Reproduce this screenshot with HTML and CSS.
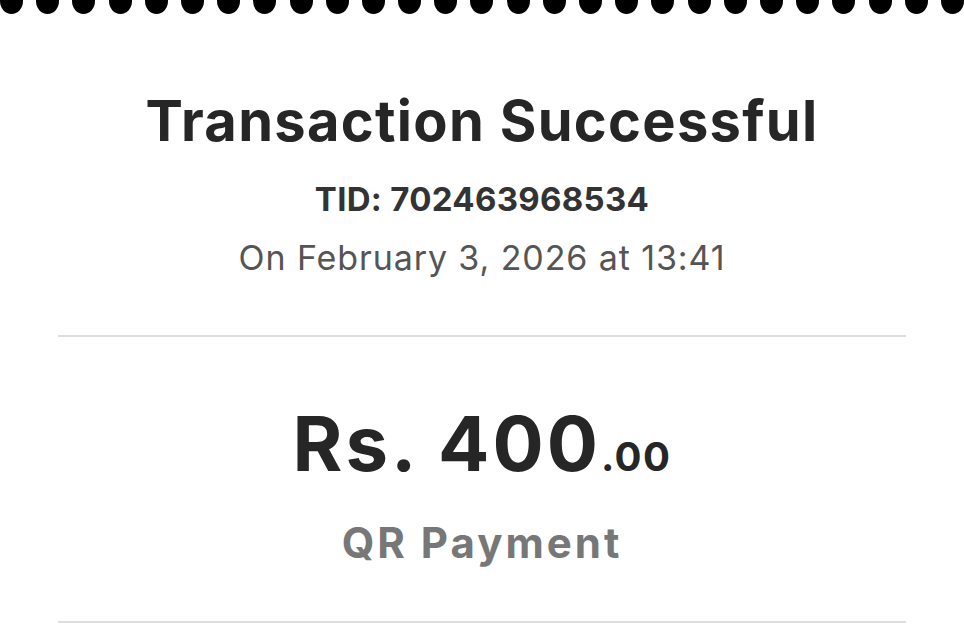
FILE: index.html
```html
<!DOCTYPE html>
<html lang="en">
<head>
<meta charset="utf-8">
<title>Transaction Successful</title>
<link rel="stylesheet" href="styles.css">
</head>
<body>
<div class="perf">
  <span class="dot"></span><span class="dot"></span><span class="dot"></span><span class="dot"></span><span class="dot"></span><span class="dot"></span><span class="dot"></span><span class="dot"></span><span class="dot"></span>
  <span class="dot"></span><span class="dot"></span><span class="dot"></span><span class="dot"></span><span class="dot"></span><span class="dot"></span><span class="dot"></span><span class="dot"></span><span class="dot"></span>
  <span class="dot"></span><span class="dot"></span><span class="dot"></span><span class="dot"></span><span class="dot"></span><span class="dot"></span><span class="dot"></span><span class="dot"></span><span class="dot"></span>
</div>
<main class="receipt">
  <section class="head">
    <h1 class="title">Transaction Successful</h1>
    <p class="tid">TID: 702463968534</p>
    <p class="date">On February 3, 2026 at 13:41</p>
  </section>
  <section class="amount-block">
    <p class="amount">Rs. 400<span class="cents">.00</span></p>
    <p class="method">QR Payment</p>
  </section>
</main>
</body>
</html>
```
FILE: styles.css
```css
* { box-sizing: border-box; }
html, body { margin: 0; padding: 0; background: #fff; }
body {
  font-family: Inter, "Open Sans", "Liberation Sans", sans-serif;
  color: #262626;
  width: 964px;
  height: 643px;
  overflow: hidden;
}
.perf {
  display: flex;
  justify-content: space-between;
  height: 14px;
  overflow: hidden;
}
.dot {
  flex: 0 0 23px;
  width: 23px;
  height: 26px;
  margin-top: -12px;
  border-radius: 50%;
  background: #000;
}
.receipt {
  padding: 0 58px;
}
.head {
  text-align: center;
  padding-top: 75px;
  padding-bottom: 57px;
  border-bottom: 2px solid #dedede;
}
.title {
  margin: 0;
  font-size: 56px;
  line-height: 64px;
  font-weight: 700;
  letter-spacing: 1.3px;
  color: #262626;
}
.tid {
  margin: 26px 0 0;
  font-size: 33px;
  line-height: 40px;
  font-weight: 700;
  letter-spacing: 0.3px;
  color: #333;
}
.date {
  margin: 19px 0 0;
  font-size: 34px;
  line-height: 40px;
  font-weight: 400;
  letter-spacing: 0.9px;
  color: #555;
}
.amount-block {
  text-align: center;
  padding-top: 61px;
  padding-bottom: 53px;
  border-bottom: 2px solid #dedede;
}
.amount {
  margin: 0;
  font-size: 76px;
  line-height: 90px;
  font-weight: 700;
  letter-spacing: 3px;
  color: #262626;
}
.cents {
  font-size: 40px;
  letter-spacing: 1.5px;
}
.method {
  margin: 16px 0 0;
  font-size: 42px;
  line-height: 50px;
  font-weight: 700;
  letter-spacing: 3px;
  color: #777;
}
```
